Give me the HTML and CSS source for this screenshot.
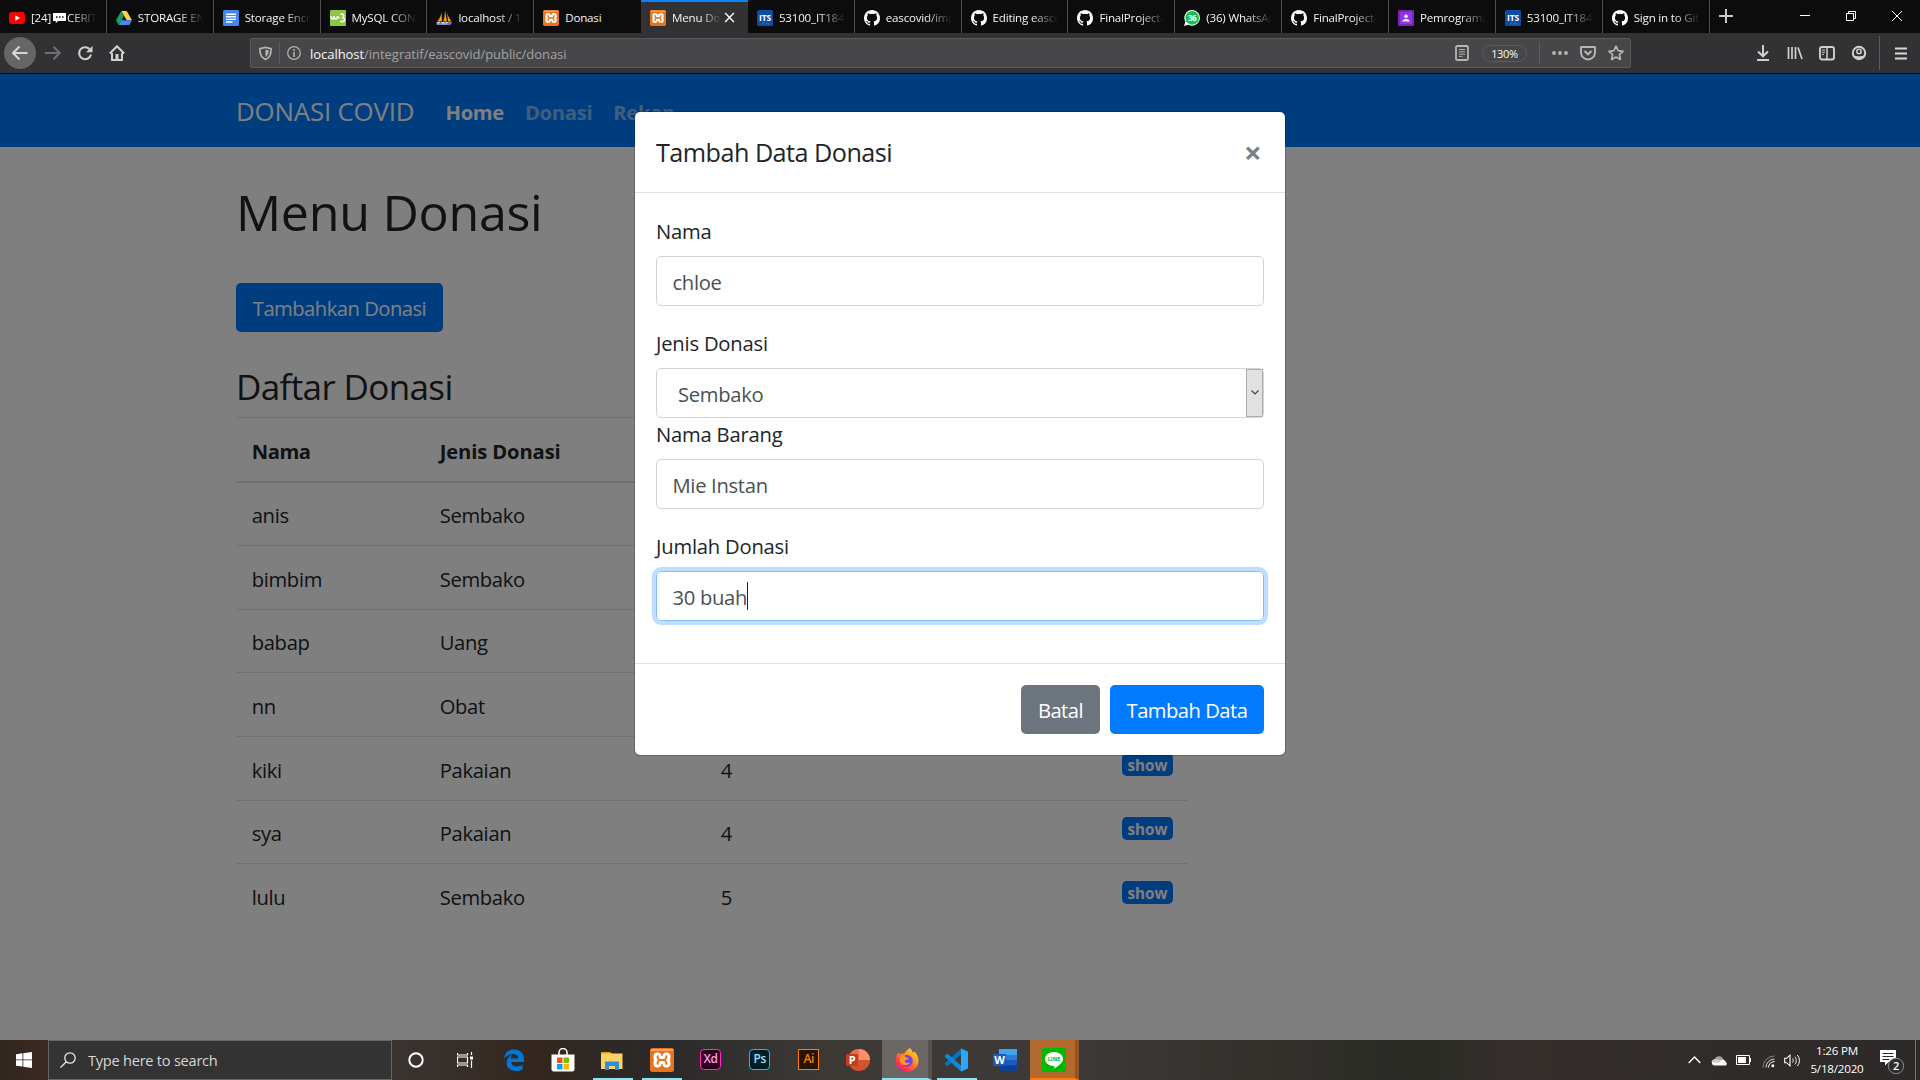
FILE: index.html
```html
<!DOCTYPE html>
<html lang="id">
<head>
<meta charset="utf-8">
<title>Menu Donasi</title>
<link rel="stylesheet" href="styles.css">
</head>
<body>
<svg width="0" height="0" class="defs" aria-hidden="true">
  <symbol id="github" viewBox="0 0 16 16"><path fill="#fff" d="M8 0C3.58 0 0 3.58 0 8c0 3.54 2.29 6.53 5.47 7.59.4.07.55-.17.55-.38v-1.49c-2.01.37-2.53-.49-2.69-.94-.09-.23-.48-.94-.82-1.13-.28-.15-.68-.52-.01-.53.63-.01 1.08.58 1.23.82.72 1.21 1.87.87 2.33.66.07-.52.28-.87.51-1.07-1.78-.2-3.64-.89-3.64-3.95 0-.87.31-1.59.82-2.15-.08-.2-.36-1.02.08-2.12 0 0 .67-.21 2.2.82a7.6 7.6 0 0 1 4 0c1.53-1.04 2.2-.82 2.2-.82.44 1.1.16 1.92.08 2.12.51.56.82 1.27.82 2.15 0 3.07-1.87 3.75-3.65 3.95.29.25.54.73.54 1.48v2.2c0 .21.15.46.55.38A8.01 8.01 0 0 0 16 8c0-4.42-3.58-8-8-8z"/></symbol>
  <symbol id="xampp" viewBox="0 0 24 24"><rect width="24" height="24" rx="2.500" fill="#e8731f"/><path d="M1 1h22v2H1z" fill="#f6a267"/><g fill="none" stroke-linecap="round" stroke-linejoin="round"><path d="M7.500 8.500v1.500l2 2-2 2v1.500M16.500 8.500v1.500l-2 2 2 2v1.500M8 12h8" stroke="#fff" stroke-width="8"/><path d="M7.700 8.300v1.700l1.600 2-1.600 2v1.700M16.300 8.300v1.700l-1.600 2 1.600 2v1.700M9.500 12h5" stroke="#e8731f" stroke-width="2"/></g></symbol>
  <symbol id="its" viewBox="0 0 16 16"><rect width="16" height="16" rx="1.500" fill="#0b4ea2"/><path d="M5 14l2-1.500M8 14.500l3-2M11 14.500l2-1" stroke="#2f74c4"/><text x="8" y="10.500" text-anchor="middle" class="its-text">ITS</text></symbol>
</svg>

<header class="browser">
  <div class="tabs">
    <div class="tab"><svg class="fav" viewBox="0 0 16 16"><rect y="2" width="16" height="12" rx="3" fill="#f00"/><path d="M6.300 5.300v5.400L11 8z" fill="#fff"/></svg><span class="tab-title">[24]<svg class="bubble" viewBox="0 0 13 11"><path d="M0 1h13v8H5l-2 2-.5-2H0z" fill="#fff"/><path d="M3 5h1.500M6 5h1.500M9 5h1.500" stroke="#111" stroke-width="1.500"/></svg>CERITA</span></div>
    <div class="tab"><svg class="fav" viewBox="0 0 16 16"><path d="M5.300 1h5.400L16 10.200h-5.300z" fill="#ffcf48"/><path d="M5.300 1L0 10.200 2.700 15 8 5.700z" fill="#11a35f"/><path d="M5.300 10.200H16L13.300 15H2.700z" fill="#4688f4"/></svg><span class="tab-title">STORAGE ENC</span></div>
    <div class="tab"><svg class="fav" viewBox="0 0 16 16"><rect width="16" height="16" rx="1.500" fill="#4285f4"/><path d="M3 4.200h10M3 6.800h10M3 9.400h10M3 12h6.500" stroke="#fff" stroke-width="1.400"/></svg><span class="tab-title">Storage Encr</span></div>
    <div class="tab"><svg class="fav" viewBox="0 0 16 16"><rect width="16" height="16" rx="1" fill="#8dc63f"/><path d="M1 6c0 4 3 4 3 0 0 4 3.500 4 3.500 0 0 1.500.8 2 2 1.400M10.300 4.500c3.700-1.500 5 2 1.700 3.300 4-.3 3.500 5-2 3.500" fill="none" stroke="#fff" stroke-width="1.500"/></svg><span class="tab-title">MySQL CONC</span></div>
    <div class="tab"><svg class="fav" viewBox="0 0 16 16"><path d="M5.500 1C5.500 5 4 8 1 11.500h5zM9 0c-.5 4 0 8-2 11.500h4zM11 2c1 4 2 6 4.500 9.500H12z" fill="#f89c0e"/><path d="M0 12h16l-1.500 3H1z" fill="#6c78af"/><path d="M2 14.500v-2h2M6 14.500v-2h2v2M10 14.500v-2h2" stroke="#dde" fill="none"/></svg><span class="tab-title">localhost / 12</span></div>
    <div class="tab"><svg class="fav"><use href="#xampp"/></svg><span class="tab-title">Donasi</span></div>
    <div class="tab active"><svg class="fav"><use href="#xampp"/></svg><span class="tab-title">Menu Donasi</span><svg class="tab-close" viewBox="0 0 12 12"><path d="M1.200 1.200l9.600 9.600M10.800 1.200L1.200 10.800" stroke="#fff" stroke-width="1.500"/></svg></div>
    <div class="tab"><svg class="fav"><use href="#its"/></svg><span class="tab-title">53100_IT1844</span></div>
    <div class="tab"><svg class="fav"><use href="#github"/></svg><span class="tab-title">eascovid/imp</span></div>
    <div class="tab"><svg class="fav"><use href="#github"/></svg><span class="tab-title">Editing eascov</span></div>
    <div class="tab"><svg class="fav"><use href="#github"/></svg><span class="tab-title">FinalProject-</span></div>
    <div class="tab"><svg class="fav" viewBox="0 0 16 16"><path d="M8.200 0a7.800 7.800 0 1 1-3.700 14.700L0 16l1.400-4.300A7.800 7.800 0 0 1 8.200 0z" fill="#fff"/><circle cx="8.200" cy="7.900" r="6.800" fill="#12c150"/><text x="8" y="11" text-anchor="middle" class="wa-text">36</text></svg><span class="tab-title">(36) WhatsApp</span></div>
    <div class="tab"><svg class="fav"><use href="#github"/></svg><span class="tab-title">FinalProject-</span></div>
    <div class="tab"><svg class="fav" viewBox="0 0 16 16"><rect width="16" height="16" rx="1.500" fill="#7627bb"/><rect x="2" y="2" width="12" height="12" fill="#9334e6"/><circle cx="8" cy="6.300" r="1.700" fill="#fff"/><path d="M4.300 11.500c0-3.500 7.400-3.500 7.400 0z" fill="#fff"/></svg><span class="tab-title">Pemrograman</span></div>
    <div class="tab"><svg class="fav"><use href="#its"/></svg><span class="tab-title">53100_IT1844</span></div>
    <div class="tab"><svg class="fav"><use href="#github"/></svg><span class="tab-title">Sign in to Git</span></div>
    <svg class="new-tab" viewBox="0 0 14 14"><path d="M7 0v14M0 7h14" stroke="#c9c9ca" stroke-width="2"/></svg>
    <div class="window-buttons">
      <svg viewBox="0 0 10 10"><path d="M0 4.500h10" stroke="#fff"/></svg>
      <svg viewBox="0 0 10 10"><path d="M.5 2.500h7v7h-7zM2.500 2.500v-2h7v7h-2" fill="none" stroke="#fff"/></svg>
      <svg viewBox="0 0 10 10"><path d="M0 0l10 10M10 0L0 10" stroke="#fff"/></svg>
    </div>
  </div>
  <div class="toolbar">
    <div class="nav-buttons">
      <span class="back"><svg viewBox="0 0 16 16"><path d="M15.500 8H1M7.500 1.500L1 8l6.500 6.500" fill="none" stroke="#d8d8d9" stroke-width="2"/></svg></span>
      <span><svg viewBox="0 0 16 16"><path d="M0 8h15M8.500 1.800L14.800 8l-6.300 6.200" fill="none" stroke="#707072" stroke-width="2"/></svg></span>
      <span><svg viewBox="0 0 16 16"><path d="M14 9.500A6 6 0 1 1 12.500 4" fill="none" stroke="#d0d0d1" stroke-width="2"/><path d="M15.500 1v6.300H9z" fill="#d0d0d1"/></svg></span>
      <span><svg viewBox="0 0 16 16"><path d="M.8 8.500L8 1.200l7.200 7.300M3 8v7h10V8" fill="none" stroke="#d0d0d1" stroke-width="2"/><path d="M6.500 9h3v6h-3z" fill="#d0d0d1"/></svg></span>
    </div>
    <div class="urlbar">
      <svg class="shield" viewBox="0 0 14 15"><path d="M1 2.200L7 1l6 1.200c0 6-.8 9.300-6 11.800C1.800 11.500 1 8.200 1 2.200z" fill="none" stroke="#b5b5b6" stroke-width="1.800"/><path d="M7 3.500v7.700c2-1.300 3.400-3 3.500-7.200z" fill="#b5b5b6"/></svg>
      <i class="divider"></i>
      <svg class="info" viewBox="0 0 14 14"><circle cx="7" cy="7" r="6.300" fill="none" stroke="#b5b5b6" stroke-width="1.200"/><path d="M7 6v5M7 3.200v1.700" stroke="#b5b5b6" stroke-width="1.600"/></svg>
      <span class="url"><b>localhost</b>/integratif/eascovid/public/donasi</span>
      <svg class="reader" viewBox="0 0 14 16"><rect x="1" y="1" width="12" height="14" rx="1.500" fill="none" stroke="#b5b5b6" stroke-width="1.800"/><path d="M4 4.500h6M4 6.800h6M4 9.100h6M4 11.400h3.500" stroke="#b5b5b6"/></svg>
      <span class="zoom-level">130%</span>
      <i class="divider"></i>
      <svg class="dots" viewBox="0 0 16 4"><circle cx="2" cy="2" r="1.900" fill="#b5b5b6"/><circle cx="8" cy="2" r="1.900" fill="#b5b5b6"/><circle cx="14" cy="2" r="1.900" fill="#b5b5b6"/></svg>
      <svg class="ico16" viewBox="0 0 16 16"><path d="M1 2h14v5.500a7 7 0 0 1-14 0z" fill="none" stroke="#b5b5b6" stroke-width="1.900" stroke-linejoin="round"/><path d="M4.500 6L8 9.300 11.500 6" fill="none" stroke="#b5b5b6" stroke-width="2"/></svg>
      <svg class="ico16" viewBox="0 0 16 16"><path d="M8 1.200l2.100 4.500 4.900.6-3.600 3.300 1 4.900L8 12l-4.400 2.500 1-4.900L1 6.300l4.900-.6z" fill="none" stroke="#b5b5b6" stroke-width="1.700" stroke-linejoin="round"/></svg>
    </div>
    <div class="tools">
      <svg class="ico16" viewBox="0 0 16 16"><path d="M8 0v11M3 6.500L8 11.300l5-4.800M2 15h12" fill="none" stroke="#d0d0d1" stroke-width="2"/></svg>
      <svg class="ico16" viewBox="0 0 16 16"><path d="M1.500 2v12M5 2v12M8.500 2v12M11 2.500l4 11.500" stroke="#d0d0d1" stroke-width="1.700"/></svg>
      <svg class="ico16" viewBox="0 0 16 16"><rect x="1" y="2" width="14" height="12.500" rx="2" fill="none" stroke="#d0d0d1" stroke-width="1.900"/><path d="M8 2v12" stroke="#d0d0d1" stroke-width="1.500"/><path d="M3 5h3M3 7.200h3M3 9.400h2" stroke="#d0d0d1"/></svg>
      <svg class="ico16" viewBox="0 0 16 16"><circle cx="8" cy="8" r="6.200" fill="none" stroke="#d0d0d1" stroke-width="2"/><circle cx="8" cy="6.500" r="2.200" fill="none" stroke="#d0d0d1" stroke-width="1.500"/><path d="M2.500 10.500c3 1 8 1 11 0L11 14H5z" fill="#d0d0d1"/></svg>
      <i class="divider"></i>
      <svg class="menu-ico" viewBox="0 0 12 13"><path d="M0 1.500h12M0 6.500h12M0 11.500h12" stroke="#d8d8d9" stroke-width="2"/></svg>
    </div>
  </div>
</header>

<main class="viewport">
  <nav class="navbar">
    <a class="brand">DONASI COVID</a>
    <a class="nav-link current">Home</a>
    <a class="nav-link">Donasi</a>
    <a class="nav-link">Rekap</a>
  </nav>
  <section class="content">
    <h1>Menu Donasi</h1>
    <button class="btn primary add">Tambahkan Donasi</button>
    <h3>Daftar Donasi</h3>
    <table>
      <thead><tr><th>Nama</th><th>Jenis Donasi</th><th></th><th></th></tr></thead>
      <tbody>
        <tr><td>anis</td><td>Sembako</td><td></td><td></td></tr>
        <tr><td>bimbim</td><td>Sembako</td><td></td><td></td></tr>
        <tr><td>babap</td><td>Uang</td><td></td><td></td></tr>
        <tr><td>nn</td><td>Obat</td><td></td><td></td></tr>
        <tr><td>kiki</td><td>Pakaian</td><td>4</td><td><span class="badge">show</span></td></tr>
        <tr><td>sya</td><td>Pakaian</td><td>4</td><td><span class="badge">show</span></td></tr>
        <tr><td>lulu</td><td>Sembako</td><td>5</td><td><span class="badge">show</span></td></tr>
      </tbody>
    </table>
  </section>
  <div class="backdrop">
    <div class="modal">
      <div class="modal-header"><h5>Tambah Data Donasi</h5><span class="close">×</span></div>
      <div class="modal-body">
        <label>Nama</label>
        <div class="control spaced">chloe</div>
        <label>Jenis Donasi</label>
        <div class="control select">Sembako<span class="select-button"><svg viewBox="0 0 8 5"><path d="M.5.5L4 4 7.500.5" fill="none" stroke="#444" stroke-width="1.200"/></svg></span></div>
        <label>Nama Barang</label>
        <div class="control spaced">Mie Instan</div>
        <label>Jumlah Donasi</label>
        <div class="control spaced focus">30 buah<i class="caret"></i></div>
      </div>
      <div class="modal-footer"><button class="btn secondary">Batal</button><button class="btn primary save">Tambah Data</button></div>
    </div>
  </div>
</main>

<footer class="taskbar">
  <div class="start"><svg viewBox="0 0 16 16"><path d="M0 2.200L6.500 1.300v6.200H0zM7.300 1.200L16 0v7.500H7.300zM0 8.300h6.500v6.300L0 13.700zM7.300 8.300H16V16l-8.700-1.200z" fill="#fff"/></svg></div>
  <div class="search"><svg viewBox="0 0 16 16"><circle cx="10" cy="6" r="5.200" fill="none" stroke="#e8e8e8" stroke-width="1.300"/><path d="M6.300 9.700L.5 15.500" stroke="#e8e8e8" stroke-width="1.300"/></svg><span>Type here to search</span></div>
  <div class="apps">
    <div class="app"><svg class="s16" viewBox="0 0 16 16"><circle cx="8" cy="8" r="6.700" fill="none" stroke="#fff" stroke-width="2"/></svg></div>
    <div class="app"><svg class="s16" viewBox="0 0 16 16"><path d="M.5 1v2h10V1M.5 15v-2h10v2M.5 5h10v6H.5zM14.500 0v3M14.500 8.500V16" fill="none" stroke="#fff" stroke-width="1.200"/><path d="M13 4.500h3v3h-3z" fill="#fff"/></svg></div>
    <div class="app"><svg class="s22" viewBox="0 0 22 22"><path d="M1 9.500C2 3 6 .5 11 .5c6 0 10 4 10 9.500v3H8c.3 4 5 6 11.500 3v4.500C13 24 3.500 21.500 3.500 14c0-4 2.500-7 6-8.500-1.200 1.200-1.600 2.200-1.700 4h7.500c0-6-10-6-14.300 0z" fill="#0078d7"/></svg></div>
    <div class="app"><svg class="s24" viewBox="0 0 24 24"><path d="M8 7V4.500a4 4 0 0 1 8 0V7" fill="none" stroke="#fff" stroke-width="1.500"/><path d="M.5 6.500h23V22l-1.500 1.500H2L.5 22z" fill="#fff"/><path d="M6 9.500h5.500V15H6z" fill="#f25022"/><path d="M12.500 9.500H18V15h-5.500z" fill="#7fba00"/><path d="M6 16h5.500v5.500H6z" fill="#00a4ef"/><path d="M12.500 16H18v5.500h-5.500z" fill="#ffb900"/></svg></div>
    <div class="app open"><svg class="s22" viewBox="0 0 22 22"><path d="M0 3h9l2 1.500V8H0z" fill="#e0a30b"/><path d="M1 4.500h20.500V20H0V6z" fill="#fbd362"/><path d="M4 21v-8.500h14V21h-4v-4H8v4z" fill="#2f8ddb"/></svg></div>
    <div class="app open"><svg class="s24"><use href="#xampp"/></svg></div>
    <div class="app"><div class="adobe xd">Xd</div></div>
    <div class="app"><div class="adobe ps">Ps</div></div>
    <div class="app"><div class="adobe ai">Ai</div></div>
    <div class="app"><svg class="s24" viewBox="0 0 24 24"><circle cx="13" cy="12" r="11" fill="#d35230"/><path d="M13 1a11 11 0 0 1 11 11H13z" fill="#ff8f6b"/><path d="M13 1v11H2A11 11 0 0 1 13 1z" fill="#ed6c47"/><rect x="0" y="6" width="12" height="12" rx="1" fill="#c43e1c"/><text x="6" y="16" text-anchor="middle" class="office">P</text></svg></div>
    <div class="app running"><svg class="s24" viewBox="0 0 24 24"><defs><linearGradient id="fx" x1="1" y1="0" x2=".2" y2="1"><stop offset="0" stop-color="#fff04a"/><stop offset=".4" stop-color="#ff9a1f"/><stop offset=".75" stop-color="#ff3f4b"/><stop offset="1" stop-color="#e3157f"/></linearGradient></defs><path d="M15 0c2 2.200 2.500 3.500 3 5 .8-.3 1.200-1 1.400-1.500C22 6 23.500 9 23.500 12.500a11.300 11.300 0 0 1-22.900 0C.6 9 2 6 4 4c0 1.200.3 1.800.8 2.500C6 5.600 8 5.500 9 5.700 11 2.500 13 1.500 15 0z" fill="url(#fx)"/><circle cx="12" cy="12.800" r="5.800" fill="#7542e5"/><path d="M5 8c3-1 5 0 6 1.500l3 .5c-1 2-3 1.500-4 2.500-1 1.500 2 3.500 5 2-1.500 4-9 4-10-2z" fill="#ff9420"/></svg></div>
    <div class="app open"><svg class="s24" viewBox="0 0 24 24"><path d="M17 .5L24 3.500v17L17 23.500z" fill="#2ba7f3"/><path d="M17 .5v6L4.500 17.500 2.800 18 .3 15.800z" fill="#0873bd"/><path d="M17 23.500v-6L4.500 6.500 2.800 6 .3 8.200z" fill="#1389d5"/></svg></div>
    <div class="app"><svg class="s24" viewBox="0 0 24 24"><path d="M6 1h18v6H6z" fill="#41a5ee"/><path d="M6 7h18v5H6z" fill="#2b7cd3"/><path d="M6 12h18v5.500H6z" fill="#185abd"/><path d="M6 17.500h18V23H6z" fill="#103f91"/><rect y="6" width="13" height="12" rx="1" fill="#185abd"/><text x="6.500" y="16" text-anchor="middle" class="office">W</text></svg></div>
    <div class="app alert"><svg class="s24" viewBox="0 0 24 24"><rect width="24" height="24" rx="2.500" fill="#00b900"/><path d="M12 4c5 0 9 3 9 7 0 4-5 7-8.500 9.500-.5-1 .5-2-.5-2.500-5 0-9-3-9-7s4-7 9-7z" fill="#fff"/><text x="12" y="13.200" text-anchor="middle" class="line-text">LINE</text></svg></div>
  </div>
  <div class="tray">
    <svg class="t-up" viewBox="0 0 13 8"><path d="M.7 7l5.800-6 5.800 6" fill="none" stroke="#fff" stroke-width="1.400"/></svg>
    <svg class="t-cloud" viewBox="0 0 16 11"><path d="M4 7a4 4 0 0 1 8-3l2 3-5 3H3z" fill="#a5a5a5"/><path d="M3 10.500A2.800 2.800 0 0 1 3 5c2-.8 4-.5 5.500.8C11 4 14 4.500 14.300 6.500c2 .7 2 4-.3 4z" fill="#fff"/><path d="M.5 7c.5-2 3-4.500 6.500-2L10 6.500 6 8z" fill="#ccc"/></svg>
    <svg class="t-batt" viewBox="0 0 15 10"><path d="M.5.5h13v9H.5z" fill="none" stroke="#fff"/><path d="M2 2h8v6H2zM14 3h1v4h-1z" fill="#fff"/></svg>
    <svg class="t-wifi" viewBox="0 0 13 13"><circle cx="10.800" cy="10.800" r="1.500" fill="#fff"/><path d="M6.500 12.500A6 6 0 0 1 12.500 6.500" fill="none" stroke="#fff"/><path d="M4 12.500A8.500 8.500 0 0 1 12.500 4" fill="none" stroke="#ddd"/><path d="M1 12.500A11.500 11.500 0 0 1 12.500 1" fill="none" stroke="#888"/></svg>
    <svg class="t-vol" viewBox="0 0 17 13"><path d="M.7 4.300h2L6 1.200v10.600L2.700 8.700h-2z" fill="none" stroke="#fff" stroke-width="1.100"/><path d="M8.500 4.500c1 1.200 1 2.800 0 4M10.800 2.700c2 2.200 2 5.400 0 7.600M13.200 1c3 3.200 3 7.800 0 11" fill="none" stroke="#fff"/></svg>
    <div class="clock"><span>1:26 PM</span><span>5/18/2020</span></div>
    <svg class="t-note" viewBox="0 0 25 25"><path d="M0 0h16v12H8.500L5 15.500V12H0z" fill="#fff"/><path d="M2.500 3.500h11M2.500 6.500h11M2.500 9.500h7" stroke="#2d2a29"/><circle cx="16" cy="16" r="7.700" fill="#2d2d2d" stroke="#888"/><text x="16" y="20" text-anchor="middle" class="count">2</text></svg>
    <i class="edge-line"></i>
  </div>
</footer>
</body>
</html>
```
FILE: styles.css
```css
* { box-sizing: border-box; }
html { font-size: 20.87px; }
body {
  margin: 0; width: 1920px; height: 1080px; overflow: hidden;
  display: grid; grid-template-rows: 74px 966px 40px;
  font-family: "Open Sans", "Noto Sans", sans-serif;
  font-size: 20.2px; line-height: 31.3px; letter-spacing: -.015em; color: #212529;
}
svg { display: block; flex: none; }
.defs { position: absolute; }
h1, h3, h5 { margin: 0; font-weight: 400; }
button { font: inherit; letter-spacing: inherit; border: 0; }

/* Browser chrome */
.browser { display: grid; grid-template-rows: 33px 41px; font-size: 11.6px; }
.tabs { display: flex; background: #0c0c0d; color: #f4f4f5; }
.tab {
  width: 106.85px; flex: none; display: flex; align-items: center;
  padding: 2px 9px 0 9px; border-right: 1px solid #4e4e4f; overflow: hidden;
}
.tab:nth-child(6) { border-right-color: #0c0c0d; }
.tab.active { background: #323234; border-top: 2px solid #0a84ff; border-right: 0; padding-top: 0; }
.fav { width: 16px; height: 16px; margin-right: 6px; }
.tab-title {
  display: flex; align-items: center; flex: 1; min-width: 0; overflow: hidden; white-space: nowrap;
  line-height: 20px; letter-spacing: -.2px;
  -webkit-mask-image: linear-gradient(90deg, #000 60%, transparent);
  mask-image: linear-gradient(90deg, #000 60%, transparent);
}
.tab:nth-child(6) .tab-title { -webkit-mask-image: none; mask-image: none; }
.bubble { width: 13px; height: 11px; margin: 0 1px 0 2px; }
.tab-close { width: 11px; height: 11px; margin: 0 4px 0 3px; }
.its-text { font: 700 8.5px "Open Sans", sans-serif; fill: #fff; letter-spacing: -.2px; }
.wa-text { font: 700 8px "Open Sans", sans-serif; fill: #fff; letter-spacing: -.5px; }
.new-tab { width: 14px; height: 14px; margin: 9px 0 0 9px; }
.window-buttons { display: flex; gap: 36px; margin: 11px 0 0 auto; padding-right: 18px; }
.window-buttons svg { width: 10px; height: 10px; }
.toolbar { display: flex; align-items: center; background: #323234; border-bottom: 1px solid #0c0c0d; }
.nav-buttons { display: flex; width: 250px; padding-left: 4px; }
.nav-buttons span { width: 32px; height: 32px; display: grid; place-items: center; border-radius: 50%; }
.nav-buttons svg { width: 16px; height: 16px; }
.nav-buttons .back { background: #666667; margin-right: 1px; }
.urlbar {
  width: 1381px; height: 30px; display: flex; align-items: center;
  background: #474749; border: 1px solid #59595b; border-radius: 2px; padding: 0 6px 0 8px;
}
.divider { width: 1px; height: 22px; background: #5c5c5e; flex: none; }
.shield { width: 13px; height: 15px; margin-right: 7px; }
.info { width: 14px; height: 14px; margin: 0 9px 0 7px; }
.url { flex: 1; color: #a2a2a3; font-size: 13px; letter-spacing: -.04px; line-height: 20px; padding-top: 2px; }
.url b { font-weight: 400; color: #f9f9fa; }
.reader { width: 14px; height: 16px; margin-right: 13px; }
.zoom-level {
  width: 45px; height: 17px; margin-right: 12px; border: 1px solid #5a5a5c; border-radius: 9px;
  text-align: center; color: #f9f9fa; font-size: 11px; line-height: 16px;
}
.dots { width: 16px; height: 4px; margin: 0 12px; }
.ico16 { width: 16px; height: 16px; }
.urlbar .ico16 + .ico16 { margin-left: 12px; }
.tools { display: flex; align-items: center; gap: 16px; margin-left: auto; padding-right: 13px; }
.tools .ico16:first-child { margin-right: 0; }
.tools .divider { height: 34px; margin-left: -4px; margin-right: -1px; }
.tools .divider + svg { width: 12px; height: 13px; }

/* Page */
.viewport { position: relative; background: #fff; overflow: hidden; }
.navbar { height: 73px; display: flex; align-items: center; background: #007bff; padding: 4px 0 0 236px; }
.brand { font-size: 25.8px; color: #fff; width: 209.5px; letter-spacing: -.15px; padding-bottom: 1px; }
.nav-link { font-weight: 700; color: rgba(255, 255, 255, .5); margin-right: 21px; }
.nav-link.current { color: #fff; }
.content { width: 952px; margin-left: 236px; padding-top: 34px; }
h1 { font-size: 50.2px; line-height: 62.6px; }
h3 { font-size: 35px; line-height: 44px; margin: 33px 0 8px; letter-spacing: -.018em; }
.btn {
  display: block; height: 49px; border-radius: 5px; padding: 2px 0 0;
  color: #fff; line-height: 31.3px; text-align: center; letter-spacing: -.025em;
}
.primary { background: #007bff; }
.secondary { background: #6c757d; width: 79px; }
.add { width: 207px; margin-top: 39px; padding-top: 3px; }
.save { width: 154px; }
table { width: 952px; border-spacing: 0; table-layout: fixed; }
th, td { text-align: left; padding: 17.7px 0 13.6px 15.65px; height: 63.6px; border-top: 1px solid #dee2e6; vertical-align: top; }
th { border-bottom: 2px solid #dee2e6; height: 66px; letter-spacing: -.006em; padding-top: 18.5px; padding-bottom: 12.8px; }
th:first-child { letter-spacing: -.02em; }
tbody tr:first-child td { border-top: 0; height: 62.6px; }
th:nth-child(1) { width: 188px; }
th:nth-child(2) { width: 281px; }
th:nth-child(3) { width: 299.5px; }
td:last-child { padding: 16.500px 15px 0 0; }
.badge {
  display: block; width: 51px; height: 23px; margin-left: auto; border-radius: 5px;
  background: #007bff; color: #fff; font-size: 15.2px; font-weight: 700; line-height: 24px; text-align: center; letter-spacing: 0;
}
.backdrop { position: absolute; inset: 0; background: rgba(0, 0, 0, .5); }
.modal {
  width: 652px; height: 645px; margin: 37px 0 0 634px; background: #fff; color: #212529;
  background-clip: padding-box; border: 1px solid rgba(0, 0, 0, .2); border-radius: 6px;
}
.modal-header {
  height: 81px; display: flex; justify-content: space-between; border-bottom: 1px solid #dee2e6;
  padding: 21px 23.5px 0 21px;
}
h5 { font-size: 25.2px; line-height: 38px; letter-spacing: -.021em; }
.close { font-size: 31px; font-weight: 700; line-height: 38px; color: #7f7f7f; }
.modal-body { height: 470px; padding: 21px 21px 0; }
label { display: block; height: 41.7px; padding-top: 2px; letter-spacing: -.01em; }
.control {
  height: 50px; border: 1px solid #ced4da; border-radius: 5px; padding: 10px 0 0 15.5px;
  color: #495057; display: flex;
}
.spaced { margin-bottom: 20.5px; }
.select { padding-left: 21px; margin-bottom: -.8px; }
.select-button {
  width: 17px; height: 48px; margin: -10px 0 0 auto; display: grid; place-items: center;
  background: #e1e1e1; border: 1px solid #adadad;
}
.select-button svg { width: 8px; height: 5px; }
.focus { border-color: #80bdff; box-shadow: 0 0 0 4px rgba(0, 123, 255, .25); }
.caret { width: 1px; height: 28px; background: #222; }
.modal-footer {
  height: 92px; border-top: 1px solid #dee2e6; padding: 21px 21px 0;
  display: flex; justify-content: flex-end; gap: 10px;
}

/* Taskbar */
.taskbar {
  display: flex; color: #fff;
  background: linear-gradient(90deg, #30261f, #3c2922 48px, #393431 395px, #33271f 540px, #2a2929 660px, #3d3a36 830px, #3c3936 1080px, #33302c 1280px, #292b25 1410px, #342e2b 1500px, #2c2a29 1920px);
}
.start { width: 48px; display: grid; place-items: center; }
.start svg { width: 16px; height: 16px; }
.search {
  width: 344px; display: flex; align-items: center; gap: 12px; padding-left: 11px;
  background: #333; border: 1px solid #666; color: #d6d6d6; font-size: 14.6px; letter-spacing: -.25px;
}
.search span { padding-top: 2px; }
.search svg { width: 16px; height: 16px; }
.apps { display: flex; margin-left: -.5px; }
.app { width: 49.1px; display: grid; place-items: center; position: relative; }
.app.open::after {
  content: ""; position: absolute; left: 5px; bottom: 0; width: 40px; height: 2px; background: #8fe3ec;
}
.app.running { background: #696663; border-bottom: 2px solid #8fe3ec; border-right: 4px solid #55514e; padding-left: 4px; padding-top: 2px; }
.app.alert { background: #b4692f; border-bottom: 2px solid #ff7a0e; border-right: 4px solid #935525; padding-left: 4px; padding-top: 2px; }
.s16 { width: 16px; height: 16px; }
.s22 { width: 22px; height: 22px; }
.s24 { width: 24px; height: 24px; }
.adobe {
  width: 21px; height: 21px; border: 1.500px solid; border-radius: 4px; margin-bottom: 2px;
  font-size: 12px; font-weight: 600; line-height: 17px; text-align: center; letter-spacing: -.3px;
}
.xd { background: #2e001e; color: #ff9ceb; border-color: #ff2bc2; }
.ps { background: #001d26; color: #8fe6ff; border-color: #00c8ff; }
.ai { background: #261300; color: #ff7c00; border-color: #ff7c00; border-radius: 0; }
.office { font: 700 11px "Open Sans", sans-serif; fill: #fff; }
.line-text { font: 700 5.5px "Open Sans", sans-serif; fill: #00b900; letter-spacing: 0; }
.tray { display: flex; align-items: center; margin-left: auto; }
.t-up { width: 13px; height: 8px; margin-right: 10px; }
.t-cloud { width: 16px; height: 11px; margin-right: 9px; }
.t-batt { width: 15px; height: 10px; margin-right: 11px; }
.t-wifi { width: 13px; height: 13px; margin: 2px 9px 0 0; }
.t-vol { width: 17px; height: 13px; margin-right: 9px; }
.clock { width: 54px; display: flex; flex-direction: column; font-size: 11.6px; line-height: 18px; text-align: center; letter-spacing: -.2px; }
.t-note { width: 25px; height: 25px; margin: 5px 10px 0 16px; }
.count { font: 600 11px "Open Sans", sans-serif; fill: #fff; }
.edge-line { width: 1px; height: 40px; background: #777; margin-right: 4px; }
```
